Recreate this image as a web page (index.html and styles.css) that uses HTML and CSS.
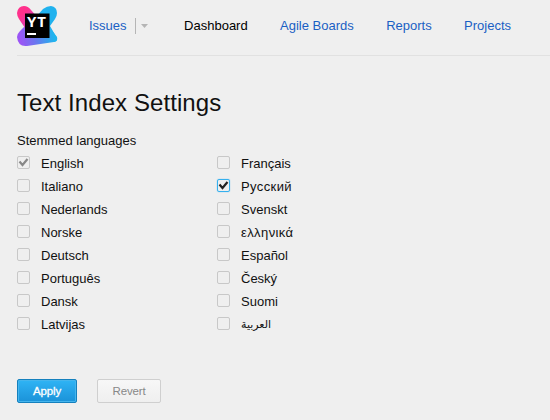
FILE: index.html
```html
<!DOCTYPE html>
<html lang="en">
<head>
<meta charset="utf-8">
<title>Text Index Settings</title>
<link rel="stylesheet" href="styles.css">
</head>
<body>
<header class="header">
  <svg class="logo" width="41" height="41" viewBox="0 0 41 41" aria-label="YT">
    <defs>
      <linearGradient id="pink" x1="0" y1="0" x2="1" y2="1"><stop offset=".3" stop-color="#ff318c"/><stop offset="1" stop-color="#b64de0"/></linearGradient>
      <linearGradient id="violet" gradientUnits="userSpaceOnUse" x1="3" y1="34" x2="36" y2="28"><stop offset="0" stop-color="#9b55f5"/><stop offset=".45" stop-color="#6a76ef"/><stop offset="1" stop-color="#20b4ee"/></linearGradient>
    </defs>
    <path fill="#20b2ee" d="M26 3Q30 0 34 0Q40 1 40 7Q40 10 38 13L33 20L40 32Q41 36 36 36L22 34L18 12Z"/>
    <path fill="url(#violet)" d="M0 31Q0 28 3 25L9 19L33 22L40 31Q41 35 37 36L10 40Q1 41 0 31Z"/>
    <path fill="url(#pink)" d="M7 0Q11 0 14 4L21 12L10 25L2 13Q0 10 0 7Q1 0 7 0Z"/>
    <rect x="8" y="7.5" width="24.5" height="24.5"/>
    <text class="logo-text" x="10" y="21">YT</text>
    <rect x="10" y="27" width="9" height="2" fill="#fff"/>
  </svg>
  <nav class="nav">
    <a class="link">Issues</a>
    <span class="more"><svg width="7" height="4" viewBox="0 0 7 4"><path fill="#b5b5b5" d="M0 0H7L3.5 4Z"/></svg></span>
    <a class="link current">Dashboard</a>
    <a class="link">Agile Boards</a>
    <a class="link">Reports</a>
    <a class="link">Projects</a>
  </nav>
</header>
<main class="main">
  <h1 class="title">Text Index Settings</h1>
  <p class="label">Stemmed languages</p>
  <div class="languages">
    <label class="lang"><span class="box disabled"><svg width="11" height="11" viewBox="0 0 11 11"><path d="M1.5 4.5L4.5 8L9.5 2"/></svg></span>English</label>
    <label class="lang"><span class="box"></span>Italiano</label>
    <label class="lang"><span class="box"></span>Nederlands</label>
    <label class="lang"><span class="box"></span>Norske</label>
    <label class="lang"><span class="box"></span>Deutsch</label>
    <label class="lang"><span class="box"></span>Português</label>
    <label class="lang"><span class="box"></span>Dansk</label>
    <label class="lang"><span class="box"></span>Latvijas</label>
    <label class="lang"><span class="box"></span>Français</label>
    <label class="lang"><span class="box checked"><svg width="11" height="11" viewBox="0 0 11 11"><path d="M1.5 4.5L4.5 8L9.5 2"/></svg></span><span class="wide" lang="ru">Русский</span></label>
    <label class="lang"><span class="box"></span>Svenskt</label>
    <label class="lang"><span class="box"></span><span class="wide" lang="el">ελληνικά</span></label>
    <label class="lang"><span class="box"></span>Español</label>
    <label class="lang"><span class="box"></span>Český</label>
    <label class="lang"><span class="box"></span>Suomi</label>
    <label class="lang"><span class="box"></span><span class="arabic" lang="ar">العربية</span></label>
  </div>
  <div class="actions">
    <button class="button primary">Apply</button>
    <button class="button">Revert</button>
  </div>
</main>
</body>
</html>
```
FILE: styles.css
```css
* { box-sizing: border-box; }
body {
  margin: 0;
  height: 420px;
  overflow: hidden;
  background: #efefef;
  color: #111;
  font: 13px/16px "Liberation Sans", Arial, sans-serif;
}
.header {
  display: flex;
  height: 56px;
  margin-left: 17px;
  padding-top: 6px;
  border-bottom: 1px solid #e1e1e1;
}
.logo { flex: none; }
.logo-text { font: bold 15px "Open Sans", sans-serif; letter-spacing: 1px; fill: #fff; }
.nav {
  display: flex;
  align-items: center;
  height: 40px;
  margin-left: 31px;
}
.link { margin-right: 32.4px; color: #1a5fc4; white-space: nowrap; }
.link:first-child { margin-right: 8px; }
.link.current { color: #000; }
.more {
  display: flex;
  align-items: center;
  height: 16px;
  margin-right: 36.5px;
  padding-left: 5px;
  border-left: 1px solid #b5b5b5;
}
.main { padding: 32px 17px 0; }
.title { margin: 0; font-size: 24px; line-height: 30px; font-weight: normal; letter-spacing: 0.08px; }
.label { margin: 15px 0 3px; }
.languages {
  display: grid;
  grid-auto-flow: column;
  grid-template: repeat(8, 23px) / 200px 200px;
}
.lang { display: flex; align-items: center; }
.box {
  width: 13px;
  height: 13px;
  margin: 0 11px 2px 0;
  border: 1px solid #c8c8c8;
  border-radius: 2px;
}
.box svg { display: block; fill: none; stroke: #222; stroke-width: 2.2; }
.box.disabled svg { stroke: #888; }
.box.checked { border-color: #35b0ee; box-shadow: 0 0 1px #35b0ee; }
.wide { letter-spacing: 0.4px; }
.arabic { font: 11px/16px "DejaVu Sans", sans-serif; }
.actions { display: flex; gap: 20px; margin-top: 43px; }
.button {
  width: 64px;
  height: 24px;
  padding: 0;
  border: 1px solid #cfcfcf;
  border-radius: 2px;
  background: linear-gradient(#f7f7f7, #efefef);
  color: #888;
  font: 11.5px/22px "Liberation Sans", Arial, sans-serif;
  letter-spacing: -0.15px;
}
.button.primary {
  width: 60px;
  border-color: #1580bd;
  background: linear-gradient(#2fb4f5, #1b92d8);
  box-shadow: inset 0 0 0 1px #45b5ed;
  color: #fff;
  -webkit-text-stroke: 0.3px #fff;
}
```
